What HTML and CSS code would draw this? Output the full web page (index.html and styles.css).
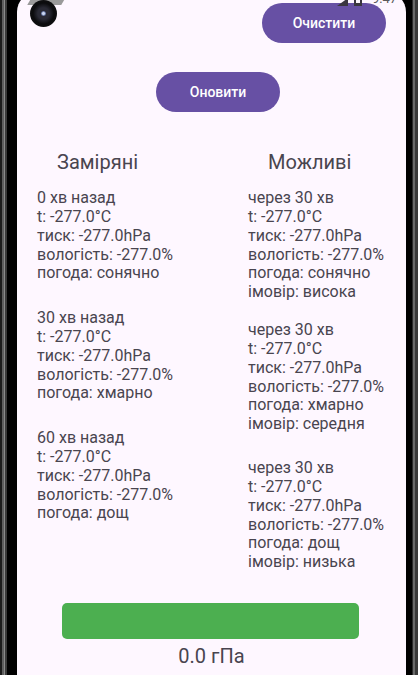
FILE: index.html
```html
<!DOCTYPE html>
<html lang="uk">
<head>
<meta charset="utf-8">
<title>Погода</title>
<link rel="stylesheet" href="styles.css">
</head>
<body>
<div class="phone">
  <div class="bezel-left"></div>
  <div class="screen">
    <div class="status">
      <span class="notif"></span>
      <svg class="signal" width="11" height="8" viewBox="0 0 11 8"><path d="M11 0 L11 8 L0 8 Z" fill="#3a3640"/></svg>
      <svg class="battery" width="8" height="8" viewBox="0 0 8 8"><rect x="0" y="0" width="8" height="8" fill="#3a3640"/><rect x="2" y="2" width="4" height="3" fill="#fef7ff"/></svg>
      <span class="time">9:47</span>
    </div>
    <div class="camera"><span class="lens"></span></div>

    <div class="top-row">
      <button class="btn">Очистити</button>
    </div>
    <div class="refresh-row">
      <button class="btn">Оновити</button>
    </div>

    <div class="columns">
      <div class="col">
        <div class="col-title">Заміряні</div>
        <div class="group g-first">
          <div>0 хв назад</div>
          <div>t: -277.0°C</div>
          <div>тиск: -277.0hPa</div>
          <div>вологість: -277.0%</div>
          <div>погода: сонячно</div>
        </div>
        <div class="group g-left">
          <div>30 хв назад</div>
          <div>t: -277.0°C</div>
          <div>тиск: -277.0hPa</div>
          <div>вологість: -277.0%</div>
          <div>погода: хмарно</div>
        </div>
        <div class="group g-left">
          <div>60 хв назад</div>
          <div>t: -277.0°C</div>
          <div>тиск: -277.0hPa</div>
          <div>вологість: -277.0%</div>
          <div>погода: дощ</div>
        </div>
      </div>
      <div class="col">
        <div class="col-title">Можливі</div>
        <div class="group g-first">
          <div>через 30 хв</div>
          <div>t: -277.0°C</div>
          <div>тиск: -277.0hPa</div>
          <div>вологість: -277.0%</div>
          <div>погода: сонячно</div>
          <div>імовір: висока</div>
        </div>
        <div class="group g-r2">
          <div>через 30 хв</div>
          <div>t: -277.0°C</div>
          <div>тиск: -277.0hPa</div>
          <div>вологість: -277.0%</div>
          <div>погода: хмарно</div>
          <div>імовір: середня</div>
        </div>
        <div class="group g-r3">
          <div>через 30 хв</div>
          <div>t: -277.0°C</div>
          <div>тиск: -277.0hPa</div>
          <div>вологість: -277.0%</div>
          <div>погода: дощ</div>
          <div>імовір: низька</div>
        </div>
      </div>
    </div>

    <div class="bar"></div>
    <div class="pressure">0.0 гПа</div>
  </div>
  <div class="bezel-right"></div>
</div>
</body>
</html>
```
FILE: styles.css
```css
html, body {
  margin: 0;
  padding: 0;
  background: #000;
  overflow: hidden;
}

.phone {
  display: flex;
  width: 418px;
  height: 675px;
  overflow: hidden;
  background: #000;
}

.bezel-left {
  width: 17px;
  flex: none;
  background: linear-gradient(to right, #1c1c1c 0 2px, #5e5e5e 2px 4px, #8a8a8a 4px 5px, #3a3a3a 5px 7px, #000 7px 17px);
}

.bezel-right {
  width: 12px;
  flex: none;
  background: linear-gradient(to right, #000 0 6px, #2a2a2a 6px 7px, #6a6a6a 7px 9px, #3a3a3a 9px 12px);
}

.screen {
  position: relative;
  width: 389px;
  flex: none;
  height: 683px;
  margin-top: -8px;
  background: #fef7ff;
  border-radius: 20px 20px 0 0;
  font-family: Roboto, "Noto Sans", sans-serif;
  color: #49454f;
  display: flex;
  flex-direction: column;
}

.status {
  position: absolute;
  left: 0;
  top: 0;
  width: 100%;
  height: 14px;
  z-index: 2;
}

.notif {
  position: absolute;
  left: 14px;
  top: 0;
  width: 34px;
  height: 13px;
  background: #9a9a9a;
  transform: skewX(-30deg);
}

.signal {
  position: absolute;
  left: 320px;
  top: 6px;
}

.battery {
  position: absolute;
  left: 337px;
  top: 6px;
}

.time {
  position: absolute;
  left: 355px;
  top: -1px;
  font-size: 13px;
  color: #5a5a5a;
  line-height: 15px;
}

.camera {
  position: absolute;
  left: 13px;
  top: 8px;
  width: 27px;
  height: 27px;
  border-radius: 50%;
  background: radial-gradient(circle, #2a2a35 0 30%, #0b0b0d 55%, #151515 100%);
  z-index: 3;
  display: flex;
  align-items: center;
  justify-content: center;
}

.lens {
  width: 5px;
  height: 5px;
  border-radius: 50%;
  background: radial-gradient(circle, #c8d4f0 0 30%, #4a5a8a 70%);
}

.top-row {
  display: flex;
  justify-content: flex-end;
  padding: 11px 20px 0 0;
}

.btn {
  width: 124px;
  height: 40px;
  border: none;
  border-radius: 20px;
  background: #6750a4;
  color: #fff;
  font-family: Roboto, "Noto Sans", sans-serif;
  font-size: 14px;
  font-weight: 500;
  padding: 0;
}

.refresh-row {
  display: flex;
  padding-left: 139px;
  margin-top: 29px;
}

.columns {
  display: grid;
  grid-template-columns: 211px 1fr;
  padding-left: 20px;
  margin-top: 38.5px;
}

.col-title {
  font-size: 20px;
  line-height: 23.4px;
  padding-left: 20px;
}

.group {
  font-size: 16px;
  line-height: 18.75px;
}

.g-first { margin-top: 15.5px; }
.g-left { margin-top: 26.25px; }
.g-r2 { margin-top: 19.5px; }
.g-r3 { margin-top: 25.5px; }

.bar {
  margin: 31px 0 0 45px;
  width: 297px;
  height: 36px;
  border-radius: 5px;
  background: #4caf50;
}

.pressure {
  margin-top: 6px;
  text-align: center;
  font-size: 20px;
  line-height: 23.4px;
}
```
